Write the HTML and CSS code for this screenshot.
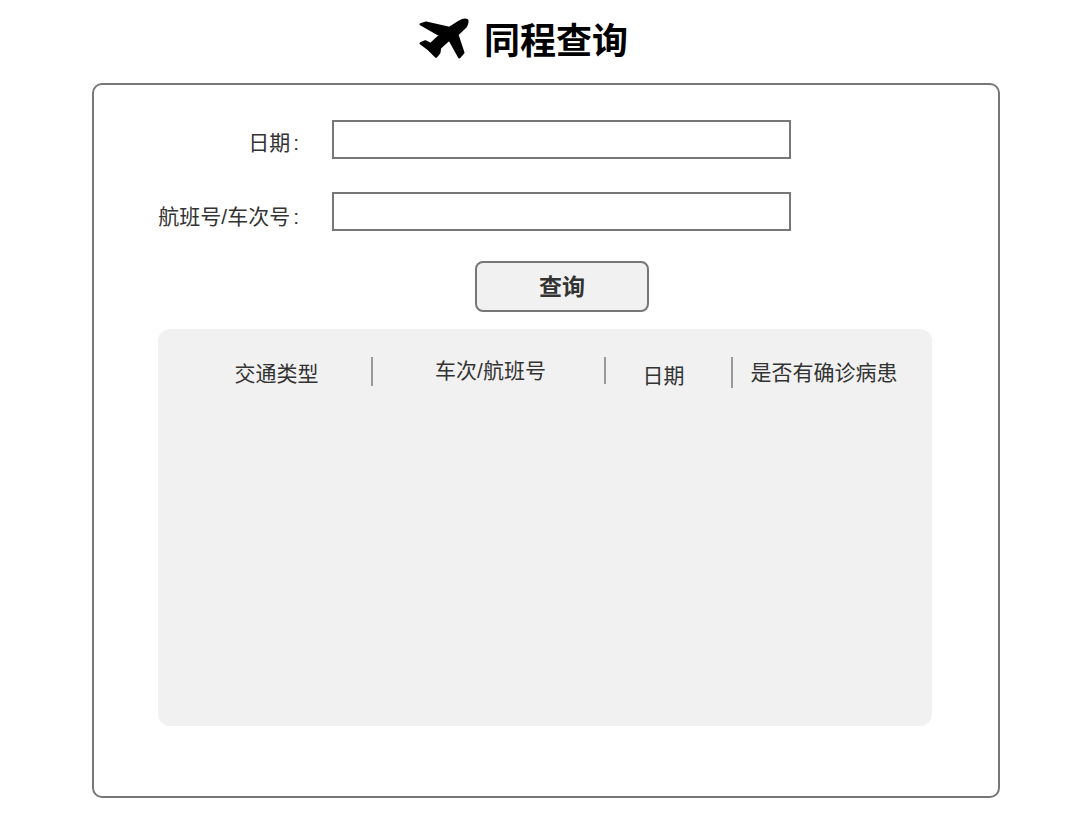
FILE: index.html
```html
<!DOCTYPE html>
<html lang="en">
<head>
    <meta charset="UTF-8">
    <title>同程查询</title>
    <link rel="stylesheet" href="styles.css">
</head>
<body>
    <header class="page-title">
        <svg class="plane-icon" viewBox="0 0 174 144" aria-hidden="true">
            <path d="M20 31L36 26L106 42L134 24Q150 15 159 18Q163 24 155 38L130 62L148 116L136 130L106 76L78 102L76 116L66 128L44 106L20 88L34 82L50 90L78 64Z"/>
        </svg>
        <h1>同程查询</h1>
    </header>
    <main class="card">
        <form class="query-form">
            <div class="form-row">
                <label for="date">日期<span class="colon">:</span></label>
                <input type="text" id="date" name="date">
            </div>
            <div class="form-row row-lower">
                <label for="number">航班号/车次号<span class="colon">:</span></label>
                <input type="text" id="number" name="number">
            </div>
            <button type="submit">查询</button>
        </form>
        <section class="results">
            <div class="results-head">
                <div class="col col-type">交通类型</div>
                <div class="col col-number">车次/航班号</div>
                <div class="col col-date">日期</div>
                <div class="col col-patient">是否有确诊病患</div>
            </div>
        </section>
    </main>
</body>
</html>
```

FILE: styles.css
```css
body {
    font-family: "Liberation Sans", "Noto Sans CJK SC", sans-serif;
    margin: 0;
    padding: 0;
    background: #ffffff;
    color: #333;
}

.page-title {
    height: 83px;
    display: flex;
    justify-content: center;
    align-items: center;
    gap: 12px;
    padding-right: 47px;
    color: #000;
}

.plane-icon {
    width: 58px;
    height: 48px;
    margin-top: -7px;
    stroke: #000;
    stroke-width: 7px;
    stroke-linejoin: round;
}

.page-title h1 {
    margin: 0;
    font-size: 36px;
    line-height: 83px;
    font-weight: bold;
}

.card {
    width: 908px;
    height: 715px;
    box-sizing: border-box;
    margin-left: 92px;
    padding: 35px 64px 0;
    border: 2px solid #777;
    border-radius: 10px;
}

.query-form {
    display: flex;
    flex-direction: column;
}

.form-row {
    display: grid;
    grid-template-columns: 142px 459px;
    column-gap: 32px;
    height: 39px;
    margin-bottom: 33px;
}

.form-row label {
    font-size: 21px;
    line-height: 45px;
    height: 39px;
    text-align: right;
}

.row-lower label {
    line-height: 49px;
}

.colon {
    margin: 0 1px 0 3px;
}

.form-row input {
    width: 100%;
    height: 39px;
    box-sizing: border-box;
    border: 2px solid #777;
    background: #fff;
}

button {
    width: 174px;
    height: 51px;
    margin: -3px 0 0 317px;
    padding: 0 0 3px;
    font-family: inherit;
    font-size: 23px;
    font-weight: bold;
    color: #333;
    background: #f1f1f1;
    border: 2px solid #777;
    border-radius: 8px;
}

.results {
    width: 774px;
    height: 397px;
    margin-top: 17px;
    background: #f1f1f1;
    border-radius: 12px;
}

.results-head {
    display: flex;
    align-items: flex-start;
    padding-top: 28px;
    font-size: 21px;
}

.col {
    box-sizing: border-box;
    text-align: center;
    white-space: nowrap;
    line-height: 30px;
}

.col-type {
    width: 215px;
    height: 29px;
    padding-left: 24px;
    line-height: 34px;
    border-right: 2px solid #999;
}

.col-number {
    width: 233px;
    height: 27px;
    padding-left: 4px;
    line-height: 28px;
    border-right: 2px solid #999;
}

.col-date {
    width: 127px;
    height: 31px;
    padding: 4px 10px 0 0;
    border-right: 2px solid #999;
}

.col-patient {
    width: 182px;
    line-height: 32px;
}
```
